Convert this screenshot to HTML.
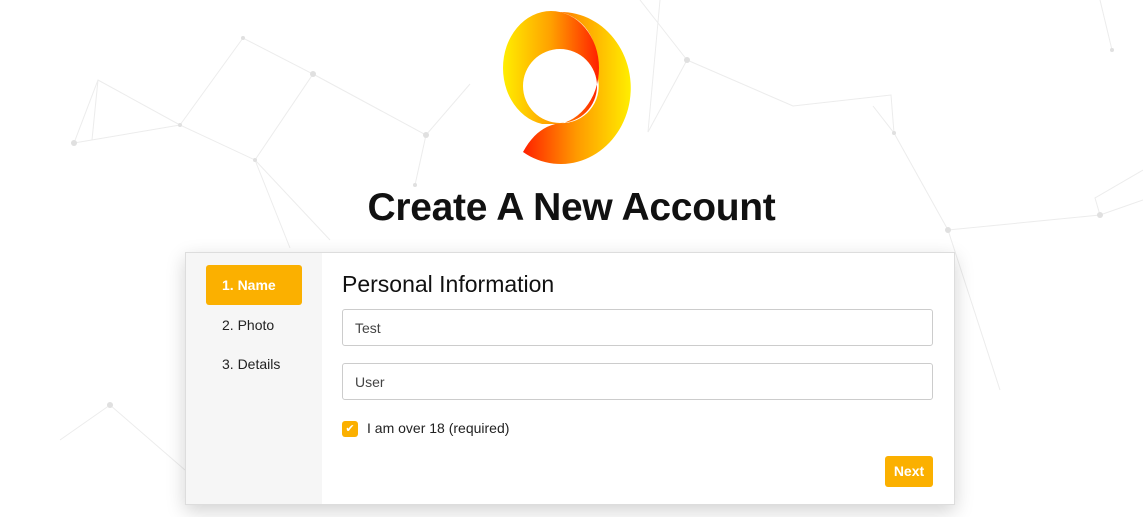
<!DOCTYPE html>
<html><head><style>
body{margin:0;width:1143px;height:517px;background:#fff;font-family:"Liberation Sans",sans-serif;position:relative;overflow:hidden}
.abs{position:absolute}
h1{position:absolute;left:0;width:1143px;top:186px;margin:0;text-align:center;font-size:39px;font-weight:bold;color:#111;letter-spacing:-0.3px}
.card{left:185px;top:252px;width:768px;height:251px;background:#fff;border:1px solid #ddd;box-shadow:0 6px 18px rgba(0,0,0,.18)}
.side{left:0;top:0;width:136px;height:251px;background:#f6f6f6}
.tab{position:absolute;left:20px;width:96px;height:40px;line-height:40px;font-size:14px;color:#222;padding-left:16px;box-sizing:border-box}
.on{background:#fbb000;color:#fff;font-weight:bold;border-radius:3px}
.inp{position:absolute;left:156px;width:591px;height:37px;border:1px solid #ccc;border-radius:3px;font-size:14px;color:#444;line-height:37px;padding-left:12px;box-sizing:border-box}
</style></head><body>
<svg class="abs" style="left:0;top:0" width="1143" height="517">
<g stroke="#ececec" stroke-width="1" fill="none">
<path d="M74 143 L98 80 L180 125 L255 160 L313 74 L243 38 L180 125 M74 143 L180 125 M98 80 L92 140 M255 160 L290 248 M313 74 L426 135 L415 185 M426 135 L470 84 M255 160 L330 240 M687 60 L648 132 L660 0 M687 60 L793 106 L891 95 L894 133 L873 106 M894 133 L948 230 L1100 215 L1143 200 M1100 215 L1095 198 L1143 170 M1112 50 L1100 0 M948 230 L1000 390 M110 405 L185 470 M110 405 L60 440 M640 0 L687 60"/>
</g>
<g fill="#e0e0e0"><circle cx="74" cy="143" r="3"/><circle cx="180" cy="125" r="2"/><circle cx="313" cy="74" r="3"/><circle cx="426" cy="135" r="3"/><circle cx="415" cy="185" r="2"/><circle cx="687" cy="60" r="3"/><circle cx="894" cy="133" r="2"/><circle cx="948" cy="230" r="3"/><circle cx="1100" cy="215" r="3"/><circle cx="110" cy="405" r="3"/><circle cx="243" cy="38" r="2"/><circle cx="255" cy="160" r="2"/><circle cx="1112" cy="50" r="2"/></g>
<defs>
<linearGradient id="g1" x1="0" x2="1"><stop offset="0" stop-color="#ffee00"/><stop offset=".5" stop-color="#ffa000"/><stop offset="1" stop-color="#ff2000"/></linearGradient>
<linearGradient id="g2" x1="0" x2="1"><stop offset="0" stop-color="#ff2000"/><stop offset=".5" stop-color="#ff9a00"/><stop offset="1" stop-color="#ffee00"/></linearGradient>
<clipPath id="c1"><rect x="490" y="0" width="200" height="124"/></clipPath>
</defs>
<path d="M560 12 A70 76 0 1 1 523 152 C535 130 550 123 565 123 A37 37 0 0 0 597 75 C600 40 585 18 560 12 Z" fill="url(#g2)"/>
<path clip-path="url(#c1)" d="M503 68 A48 57 0 1 1 599 68 A48 57 0 1 1 503 68 Z M523 86 A37 37 0 1 0 597 86 A37 37 0 1 0 523 86 Z" fill="url(#g1)" fill-rule="evenodd"/>
</svg>
<h1>Create A New Account</h1>
<div class="abs card">
<div class="abs side"></div>
<div class="tab on" style="top:12px">1. Name</div>
<div class="tab" style="top:52px">2. Photo</div>
<div class="tab" style="top:91px">3. Details</div>
<div class="abs" style="left:156px;top:18px;font-size:23px;color:#111">Personal Information</div>
<div class="inp" style="top:56px">Test</div>
<div class="inp" style="top:110px">User</div>
<div class="abs" style="left:156px;top:168px;width:16px;height:16px;background:#fbb000;border-radius:3px;color:#fff;font-size:11px;line-height:16px;text-align:center">✔</div>
<div class="abs" style="left:181px;top:167px;font-size:14px;color:#222">I am over 18 (required)</div>
<div class="abs" style="left:699px;top:203px;width:48px;height:31px;background:#fbb000;border-radius:3px;color:#fff;font-weight:bold;font-size:14px;line-height:31px;text-align:center">Next</div>
</div>
</body></html>
